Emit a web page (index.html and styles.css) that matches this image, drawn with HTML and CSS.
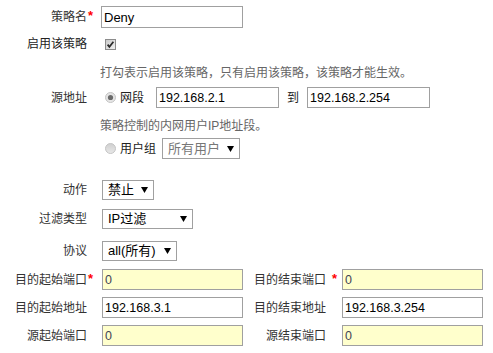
FILE: index.html
```html
<!DOCTYPE html>
<html lang="zh">
<head>
<meta charset="utf-8">
<link rel="stylesheet" href="styles.css">
</head>
<body>
<div class="form">
  <div class="row r1">
    <span class="lbl req">策略名</span>
    <input class="txt name" type="text" value="Deny">
  </div>
  <div class="row r2">
    <span class="lbl">启用该策略</span>
    <span class="chk"><svg width="11" height="11" viewBox="0 0 11 11"><defs><linearGradient id="cg" x1="0" y1="0" x2="1" y2="1"><stop offset="0" stop-color="#c8c8c8"/><stop offset="1" stop-color="#f2f2f2"/></linearGradient></defs><rect x="0.5" y="0.5" width="10" height="10" fill="url(#cg)" stroke="#8c8c8c"/><path d="M2.6 5.6 L4.4 7.8 L8.4 2.8" fill="none" stroke="#2a2a2a" stroke-width="1.7"/></svg></span>
  </div>
  <div class="hint r3">打勾表示启用该策略，只有启用该策略，该策略才能生效。</div>
  <div class="row r4">
    <span class="lbl">源地址</span>
    <span class="radio"><svg width="11" height="11" viewBox="0 0 11 11"><circle cx="5.5" cy="5.5" r="5" fill="#e4e4e4" stroke="#c4c4c4"/><circle cx="5.5" cy="5.5" r="2.6" fill="#6a6a6a"/></svg></span>
    <span class="opt">网段</span>
    <input class="txt ip ip1" type="text" value="192.168.2.1">
    <span class="to">到</span>
    <input class="txt ip" type="text" value="192.168.2.254">
  </div>
  <div class="hint r5">策略控制的内网用户<span class="latin">IP</span>地址段。</div>
  <div class="row r6">
    <span class="spacer"></span>
    <span class="radio"><svg width="11" height="11" viewBox="0 0 11 11"><defs><linearGradient id="rg" x1="0" y1="0" x2="0" y2="1"><stop offset="0" stop-color="#cfcfcf"/><stop offset="1" stop-color="#e8e8e8"/></linearGradient></defs><circle cx="5.5" cy="5.5" r="5" fill="url(#rg)" stroke="#c4c4c4"/></svg></span>
    <span class="opt">用户组</span>
    <div class="sel grp dis"><span>所有用户</span><svg class="arr" width="7" height="6" viewBox="0 0 7 6"><polygon points="0,0 7,0 3.5,6" fill="#000"/></svg></div>
  </div>
  <div class="row r7">
    <span class="lbl">动作</span>
    <div class="sel act"><span>禁止</span><svg class="arr" width="7" height="6" viewBox="0 0 7 6"><polygon points="0,0 7,0 3.5,6" fill="#000"/></svg></div>
  </div>
  <div class="row r8">
    <span class="lbl">过滤类型</span>
    <div class="sel typ"><span>IP过滤</span><svg class="arr" width="7" height="6" viewBox="0 0 7 6"><polygon points="0,0 7,0 3.5,6" fill="#000"/></svg></div>
  </div>
  <div class="row r9">
    <span class="lbl">协议</span>
    <div class="sel pro"><span>all(所有)</span><svg class="arr" width="7" height="6" viewBox="0 0 7 6"><polygon points="0,0 7,0 3.5,6" fill="#000"/></svg></div>
  </div>
  <div class="row r10">
    <span class="lbl req">目的起始端口</span>
    <input class="txt wide yel" type="text" value="0">
    <span class="lbl2 req2">目的结束端口</span>
    <input class="txt wide yel" type="text" value="0">
  </div>
  <div class="row r11">
    <span class="lbl">目的起始地址</span>
    <input class="txt wide" type="text" value="192.168.3.1">
    <span class="lbl2">目的结束地址</span>
    <input class="txt wide" type="text" value="192.168.3.254">
  </div>
  <div class="row r12">
    <span class="lbl">源起始端口</span>
    <input class="txt wide yel" type="text" value="0">
    <span class="lbl2">源结束端口</span>
    <input class="txt wide yel" type="text" value="0">
  </div>
</div>
</body>
</html>
```
FILE: styles.css
```css
html, body {
  margin: 0;
  padding: 0;
  background: #fff;
}
body {
  font-family: "Liberation Sans", "Noto Sans CJK SC", sans-serif;
  font-size: 12px;
  line-height: 14px;
  color: #333;
}
.form {
  display: flex;
  flex-direction: column;
  width: 493px;
}
.row {
  display: flex;
  align-items: center;
}
.lbl {
  flex: none;
  width: 87px;
  margin-right: 15px;
  text-align: right;
  white-space: nowrap;
  position: relative;
}
.spacer {
  flex: none;
  width: 102px;
}
.lbl2 {
  flex: none;
  width: 83px;
  margin-right: 16px;
  text-align: right;
  white-space: nowrap;
  position: relative;
}
.req::after,
.req2::after {
  content: "*";
  color: #f00;
  font-family: "Liberation Sans", sans-serif;
  font-size: 13px;
  font-weight: bold;
  position: absolute;
  top: -1px;
  left: calc(100% + 1px);
}
.req2::after {
  left: calc(100% + 6px);
}
.txt {
  box-sizing: border-box;
  flex: none;
  height: 21px;
  margin: 0;
  padding: 0 2px;
  border: 1px solid #a0a0a0;
  border-radius: 0;
  background: #fff;
  font-family: "Liberation Sans", sans-serif;
  font-size: 12.5px;
  color: #000;
  outline: none;
}
.name {
  width: 142px;
  height: 22px;
  margin-left: -1px;
  font-size: 13px;
}
.ip {
  width: 123px;
}
.ip1 {
  margin-left: 12px;
}
.wide {
  width: 141px;
}
.yel {
  background: #ffffcc;
  color: #445;
}
.chk {
  display: flex;
  margin-left: 3px;
}
.radio {
  display: flex;
  flex: none;
  margin-left: 3px;
}
.opt {
  margin-left: 4px;
  color: #222;
  white-space: nowrap;
}
.to {
  margin: 0 8px;
  color: #222;
}
.hint {
  padding-left: 100px;
  color: #666;
  white-space: nowrap;
  height: 14px;
}
.sel {
  box-sizing: border-box;
  flex: none;
  height: 20px;
  border: 1px solid #a0a0a0;
  background: #fff;
  display: flex;
  align-items: center;
  justify-content: space-between;
  padding: 0 5px 0 5px;
  font-size: 13px;
  color: #000;
  white-space: nowrap;
}
.dis { color: #777; }
.arr { flex: none; display: block; }
.grp { width: 78px; margin-left: 6px; height: 21px; }
.act { width: 52px; }
.typ { width: 91px; }
.pro { width: 75px; }

.r1 { margin-top: 6px; height: 22px; }
.r2 { margin-top: 10px; height: 12px; color: #222; }
.r3 { margin-top: 16px; }
.r4 { margin-top: 7px; height: 21px; }
.r5 { margin-top: 11px; }
.r6 { margin-top: 5px; height: 21px; }
.r7 { margin-top: 21px; height: 20px; }
.r8 { margin-top: 9px; height: 20px; }
.r9 { margin-top: 12px; height: 20px; }
.r10 { margin-top: 8px; height: 21px; }
.r11 { margin-top: 7px; height: 21px; }
.r12 { margin-top: 7px; height: 21px; }
```
